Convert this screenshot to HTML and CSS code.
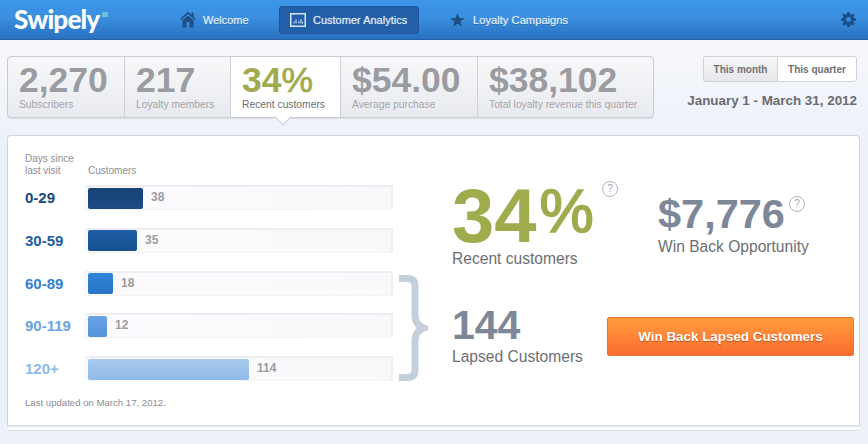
FILE: index.html
```html
<!DOCTYPE html>
<html lang="en">
<head>
	<meta charset="UTF-8">
	<title>Swipely</title>
	<link rel="stylesheet" href="styles.css">
</head>
<body>

	<header class="navbar">
		<div class="logo">Swipely<span class="logo-mark"></span></div>
		<nav class="nav">
			<a class="nav-item nav-welcome">
				<svg class="nav-icon" width="18" height="17" viewBox="0 0 18 17"><path d="M9 0.5 L0.5 8.5 L2.5 8.5 L9 3 L15.5 8.5 L17.5 8.5 L14.5 5.6 L14.5 1.5 L12.5 1.5 L12.5 3.8 Z" fill="#1d4f86"/><path d="M3.5 9 L9 4.4 L14.5 9 L14.5 16.5 L10.6 16.5 L10.6 11 L7.4 11 L7.4 16.5 L3.5 16.5 Z" fill="#1d4f86"/></svg>
				Welcome
			</a>
			<a class="nav-item nav-active">
				<svg class="nav-icon" width="16" height="14" viewBox="0 0 16 14"><rect x="0.75" y="0.75" width="14.5" height="12.5" fill="none" stroke="#d6e6f8" stroke-width="1.5"/><path d="M4 10.5 V8.5 M6 10.5 V6.5 M9 10.5 V8 M11 10.5 V6 M12.5 10.5 V8.8" stroke="#d6e6f8" stroke-width="1"/></svg>
				Customer Analytics
			</a>
			<a class="nav-item nav-loyalty">
				<svg class="nav-icon" width="15" height="14" viewBox="0 0 15 14"><path d="M7.5 0 L9.3 5 L14.8 5.2 L10.4 8.5 L12 13.8 L7.5 10.7 L3 13.8 L4.6 8.5 L0.2 5.2 L5.7 5 Z" fill="#1d4f86"/></svg>
				Loyalty Campaigns
			</a>
		</nav>
		<svg class="gear" width="15" height="15" viewBox="0 0 16 16"><path fill="#1d4f86" fill-rule="evenodd" d="M6.7 0 H9.3 L9.7 2.2 L11 2.8 L12.9 1.5 L14.5 3.1 L13.2 5 L13.8 6.3 L16 6.7 V9.3 L13.8 9.7 L13.2 11 L14.5 12.9 L12.9 14.5 L11 13.2 L9.7 13.8 L9.3 16 H6.7 L6.3 13.8 L5 13.2 L3.1 14.5 L1.5 12.9 L2.8 11 L2.2 9.7 L0 9.3 V6.7 L2.2 6.3 L2.8 5 L1.5 3.1 L3.1 1.5 L5 2.8 L6.3 2.2 Z M8 5.4 A2.6 2.6 0 1 0 8 10.6 A2.6 2.6 0 1 0 8 5.4 Z"/></svg>
	</header>

	<main class="content">
		<div class="top-row">
			<div class="tabs">
				<div class="tab tab-subscribers"><b>2,270</b><span>Subscribers</span></div>
				<div class="tab tab-loyalty"><b>217</b><span>Loyalty members</span></div>
				<div class="tab tab-recent"><b>34<i>%</i></b><span>Recent customers</span></div>
				<div class="tab tab-average"><b>$54.00</b><span>Average purchase</span></div>
				<div class="tab tab-revenue"><b>$38,102</b><span>Total loyalty revenue this quarter</span></div>
			</div>
			<div class="range">
				<div class="range-buttons">
					<button class="range-btn range-month">This month</button>
					<button class="range-btn range-quarter">This quarter</button>
				</div>
				<div class="range-date">January 1 - March 31, 2012</div>
			</div>
		</div>

		<section class="panel">
			<div class="chart">
				<div class="chart-head">
					<span class="head-days">Days since<br>last visit</span>
					<span>Customers</span>
				</div>
				<div class="chart-body">
					<div class="rows">
						<div class="row row-1"><span class="row-label">0-29</span><div class="track"><div class="fill" style="width:55px"></div><span class="count">38</span></div></div>
						<div class="row row-2"><span class="row-label">30-59</span><div class="track"><div class="fill" style="width:49px"></div><span class="count">35</span></div></div>
						<div class="row row-3"><span class="row-label">60-89</span><div class="track"><div class="fill" style="width:25px"></div><span class="count">18</span></div></div>
						<div class="row row-4"><span class="row-label">90-119</span><div class="track"><div class="fill" style="width:19px"></div><span class="count">12</span></div></div>
						<div class="row row-5"><span class="row-label">120+</span><div class="track"><div class="fill" style="width:161px"></div><span class="count">114</span></div></div>
					</div>
					<svg class="brace" width="30" height="106" viewBox="0 0 30 106"><path d="M1 3.5 H9 Q17 3.5 17 11 V40 Q17 50 26 53 Q17 56 17 66 V95 Q17 102.5 9 102.5 H1" fill="none" stroke="#c6d0dc" stroke-width="7"/></svg>
				</div>
				<p class="updated">Last updated on March 17, 2012.</p>
			</div>

			<div class="summary">
				<div class="stat stat-recent">
					<div class="stat-num">34<i>%</i><span class="help help-big">?</span></div>
					<div class="stat-label">Recent customers</div>
				</div>
				<div class="stat stat-win">
					<div class="stat-num">$7,776<span class="help">?</span></div>
					<div class="stat-label">Win Back Opportunity</div>
				</div>
				<div class="stat stat-lapsed">
					<div class="stat-num">144</div>
					<div class="stat-label">Lapsed Customers</div>
				</div>
				<button class="win-back">Win Back Lapsed Customers</button>
			</div>
		</section>
		<div class="panel-edge"></div>
	</main>

</body>
</html>
```

FILE: styles.css
```css
html, body{
	height: 100%;
}

body{
	margin: 0;
	overflow: hidden;
	background: linear-gradient(#fbfbfd, #edf1f9 140px);
	font-family: "Liberation Sans", Arial, sans-serif;
	color: #666;
}

.navbar{
	height: 40px;
	box-sizing: border-box;
	display: flex;
	align-items: center;
	background: linear-gradient(#3d96e8, #3a8fe0 45%, #2a70c0);
	border-bottom: 1px solid #2862a6;
	padding: 0 12px 0 14px;
}

.logo{
	width: 165px;
	position: relative;
	font-family: Lato, sans-serif;
	font-size: 26px;
	font-weight: 900;
	letter-spacing: -0.8px;
	line-height: 36px;
	margin-top: -2px;
	color: #fff;
}

.logo-mark{
	position: absolute;
	left: 88px;
	top: 11px;
	width: 6px;
	height: 5px;
	background: #6fc0d8;
}

.nav{
	flex: 1;
	display: flex;
	align-items: center;
	font-size: 11px;
	color: #dcebfb;
	text-shadow: 0 0 1px rgba(235,245,255,0.7), 0 1px 0 rgba(20,60,110,0.5);
}

.nav-item{
	display: flex;
	align-items: center;
	height: 28px;
	box-sizing: border-box;
	gap: 6px;
}

.nav-welcome{
	width: 100px;
}

.nav-active{
	width: 140px;
	padding-left: 10px;
	gap: 7px;
	background: #235fa8;
	border: 1px solid #1f5598;
	border-radius: 3px;
}

.nav-loyalty{
	margin-left: 31px;
	gap: 8px;
	font-size: 11.2px;
}

.gear{
	margin-top: -1px;
}

.content{
	padding: 16px 8px 0 7px;
}

.top-row{
	display: flex;
	justify-content: space-between;
	align-items: flex-start;
}

.tabs{
	display: flex;
	height: 62px;
	box-sizing: border-box;
	border: 1px solid #c9ccd2;
	border-radius: 4px;
	background: linear-gradient(#f8f8fa, #e8eaef);
	box-shadow: 0 1px 1px rgba(0,0,0,0.08);
}

.tab{
	position: relative;
	box-sizing: border-box;
	border-right: 1px solid #cfd1d6;
	padding: 6px 0 0 11px;
	color: #9a9ca1;
}

.tab b{
	display: block;
	font-size: 35.5px;
	line-height: 35px;
}

.tab span{
	display: block;
	font-size: 10.3px;
	line-height: 13px;
	color: #a3a5aa;
}

.tab i, .stat-num i{
	font-style: normal;
	font-weight: normal;
}

.tab i{
	-webkit-text-stroke: 0.7px #a0ab4e;
}

.tab-subscribers{ width: 117px; }
.tab-loyalty{ width: 106px; }
.tab-average{ width: 137px; }
.tab-revenue{ width: 175px; border-right: 0; }

.tab-recent{
	width: 110px;
	background: #fff;
	color: #a0ab4e;
}

.tab-recent span{
	color: #6d6f72;
}

/* arrow under the selected tab */
.tab-recent::after{
	content: "";
	position: absolute;
	left: 46px;
	bottom: -6px;
	width: 11px;
	height: 11px;
	background: #fff;
	border-right: 1px solid #c9ccd2;
	border-bottom: 1px solid #c9ccd2;
	transform: rotate(45deg);
}

.range{
	width: 172px;
	margin-right: 3px;
	text-align: right;
}

.range-buttons{
	display: flex;
	justify-content: flex-end;
	height: 26px;
}

.range-btn{
	padding: 0;
	font-family: inherit;
	font-size: 10px;
	font-weight: bold;
	color: #6f7074;
	border: 1px solid #d0d2d6;
	outline: none;
}

.range-month{
	width: 74px;
	background: linear-gradient(#f7f7f9, #e6e7ea);
	border-radius: 3px 0 0 3px;
	border-right: 0;
}

.range-quarter{
	width: 80px;
	background: #fff;
	border-radius: 0 3px 3px 0;
}

.range-date{
	margin-top: 11px;
	font-size: 13.4px;
	font-weight: bold;
	line-height: 16px;
	color: #6b6c70;
	white-space: nowrap;
}

.panel{
	display: flex;
	height: 292px;
	box-sizing: border-box;
	margin-top: 17px;
	background: #fff;
	border: 1px solid #d0d3da;
	border-bottom: 2px solid #dfe1e6;
	border-radius: 4px 4px 0 0;
	padding: 17px 0 0 17px;
}

.panel-edge{
	height: 3px;
	margin: 0 0 0 1px;
	background: #fbfcfe;
	border-bottom: 1px solid #d8dbe1;
}

.chart{
	width: 427px;
	flex-shrink: 0;
}

.chart-head{
	display: flex;
	align-items: flex-end;
	font-size: 10px;
	line-height: 12px;
	color: #8d8f94;
}

.head-days{
	width: 63px;
}

.chart-body{
	display: flex;
	align-items: flex-end;
	margin-top: 8px;
}

.rows{
	width: 368px;
	flex-shrink: 0;
}

.row{
	display: flex;
	align-items: center;
	height: 25px;
	margin-bottom: 17.75px;
}

.row:last-child{
	margin-bottom: 0;
}

.row-label{
	width: 60px;
	font-size: 15px;
	font-weight: bold;
}

.track{
	flex: 1;
	display: flex;
	align-items: center;
	gap: 8px;
	height: 25px;
	box-sizing: border-box;
	padding: 0 2px;
	background: linear-gradient(90deg, #fcfafc, #f9f9fc);
	border: 1px solid #f3f3f6;
	border-top: 2px solid #eeeef2;
	border-right: 2px solid #eeeef2;
	border-radius: 2px;
}

.fill{
	height: 21px;
	border-radius: 2px;
}

.count{
	font-size: 12px;
	font-weight: bold;
	color: #9c9ca0;
	margin-top: -2px;
}

.row-1 .row-label{ color: #17477f; }
.row-2 .row-label{ color: #1d5ca6; }
.row-3 .row-label{ color: #2f7fd0; }
.row-4 .row-label{ color: #6ba3e0; }
.row-5 .row-label{ color: #8ab9ea; }

.row-1 .fill{ background: linear-gradient(#1a4377, #1b4a85); }
.row-2 .fill{ background: linear-gradient(#1e5ea8, #17508f); }
.row-3 .fill{ background: linear-gradient(#3186d8, #2674c6); }
.row-4 .fill{ background: linear-gradient(#6ba4e4, #5791d8); }
.row-5 .fill{ background: linear-gradient(#a9cbee, #8fbae8); }

.brace{
	margin: 0 0 0 5px;
	flex-shrink: 0;
}

.updated{
	margin: 16px 0 0;
	font-size: 9.6px;
	line-height: 12px;
	color: #8a8c91;
}

.summary{
	flex: 1;
	display: grid;
	grid-template-columns: 154px 1fr;
	grid-template-rows: 127px auto;
	padding-top: 26px;
}

.stat-num{
	position: relative;
	font-weight: bold;
}

.stat-label{
	color: #6d6e72;
	font-size: 15.6px;
	line-height: 18px;
}

.stat-recent .stat-num{
	font-size: 76px;
	line-height: 65px;
	color: #a0ab4e;
}

/* the percent sign sits high next to the digits */
.stat-recent i{
	font-size: 61px;
	margin-left: 3px;
	vertical-align: 10px;
	-webkit-text-stroke: 1.6px #a0ab4e;
}

.stat-recent .stat-label{
	margin-top: 2px;
}

.stat-win{
	padding: 14px 0 0 52px;
}

.stat-win .stat-num{
	font-size: 41.5px;
	line-height: 42px;
	color: #7d8798;
}

.stat-win .stat-label{
	margin-top: 3px;
}

.stat-lapsed .stat-num{
	font-size: 41px;
	line-height: 38px;
	color: #7d8798;
}

.stat-lapsed .stat-label{
	margin-top: 4px;
}

.help{
	position: absolute;
	left: 131px;
	top: 3px;
	width: 16px;
	height: 16px;
	box-sizing: border-box;
	border: 1.5px solid #b4b6ba;
	border-radius: 50%;
	font-size: 10px;
	font-weight: normal;
	line-height: 13px;
	letter-spacing: 0;
	text-align: center;
	color: #a0a2a6;
	-webkit-text-stroke: 0;
}

.help-big{
	left: 150px;
	top: 2px;
}

.win-back{
	align-self: start;
	justify-self: end;
	width: 247px;
	height: 39px;
	margin: 11px 5px 0 0;
	padding: 0;
	font-family: inherit;
	font-size: 13.4px;
	font-weight: bold;
	color: #fff;
	text-shadow: 0 1px 1px rgba(150,60,10,0.7);
	background: linear-gradient(#ff9a3c, #ff8a38 40%, #fb6c30);
	border: 1px solid #e8762e;
	border-radius: 2px;
}
```
